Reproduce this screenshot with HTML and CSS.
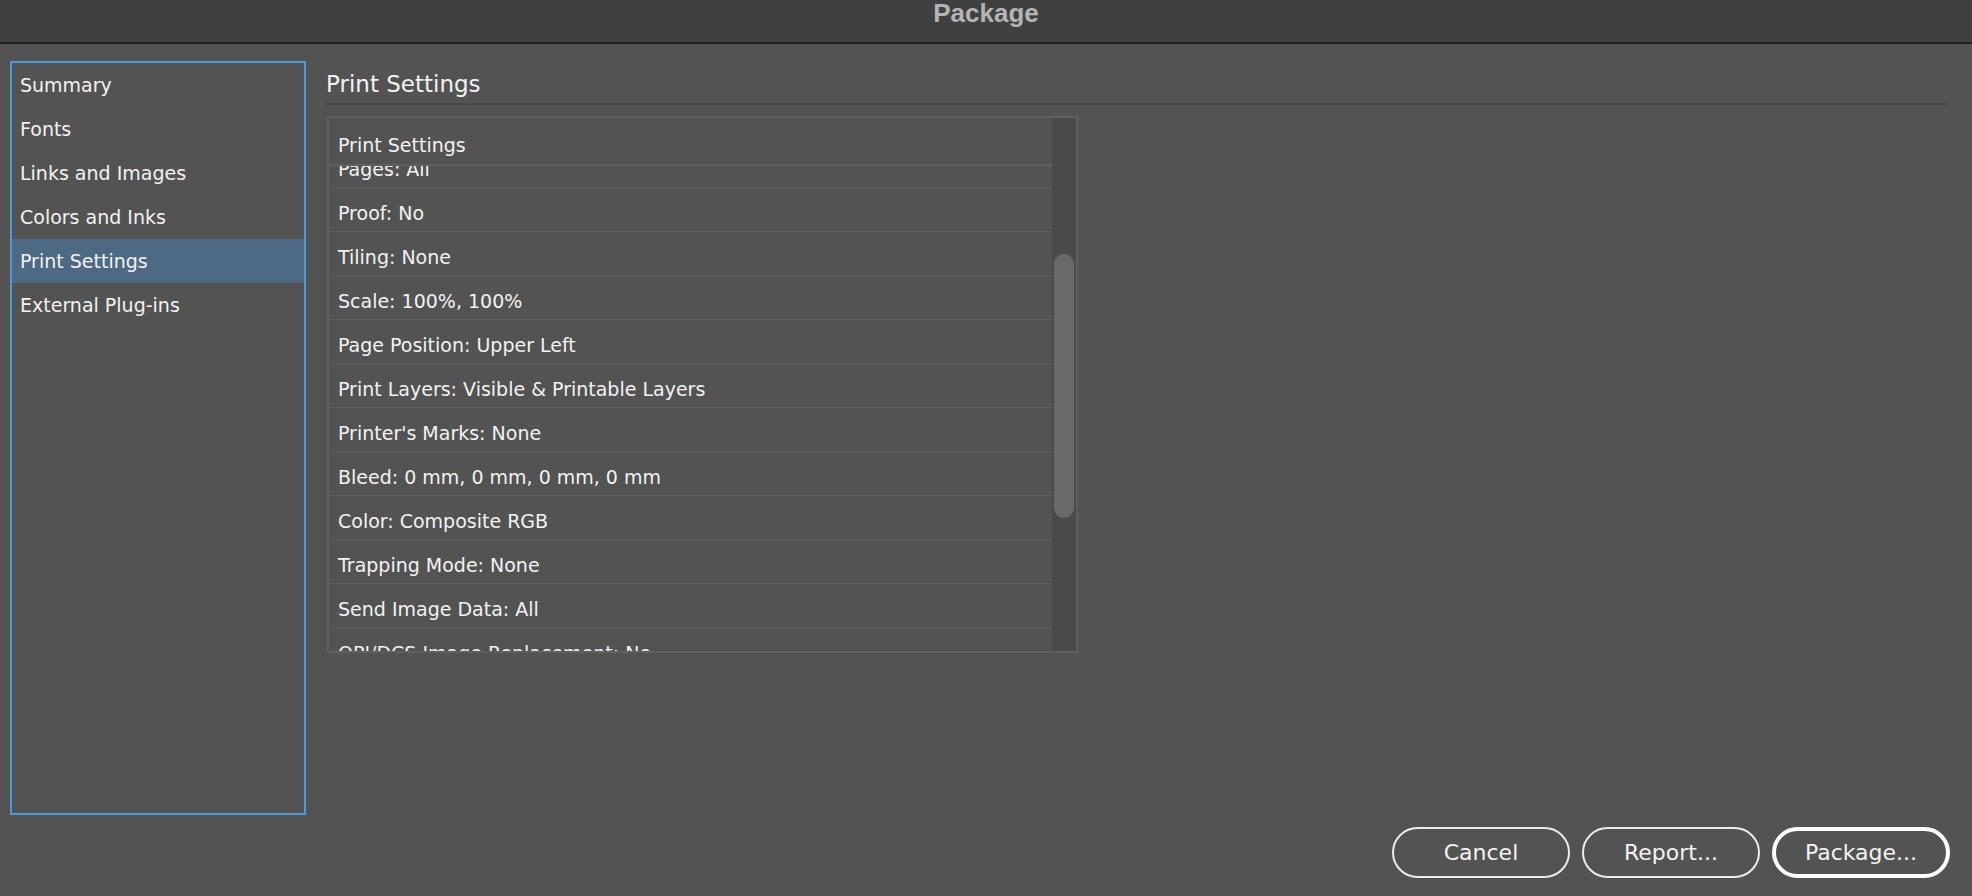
FILE: index.html
```html
<!DOCTYPE html>
<html lang="en">
<head>
    <meta charset="UTF-8">
    <meta name="viewport" content="width=device-width, initial-scale=1.0">
    <title>Package</title>
    <link rel="stylesheet" href="styles.css">
</head>

<body>
    <header class="titlebar">Package</header>

    <div class="dialog">
        <div class="content">
            <ul class="sidebar">
                <li>Summary</li>
                <li>Fonts</li>
                <li>Links and Images</li>
                <li>Colors and Inks</li>
                <li class="active">Print Settings</li>
                <li>External Plug-ins</li>
            </ul>

            <section class="main">
                <h2 class="section-title">Print Settings</h2>

                <div class="table-box">
                    <div class="table-body">
                        <div class="table-head">Print Settings</div>
                        <div class="rows-view">
                            <ul class="rows">
                                <li>Pages: All</li>
                                <li>Proof: No</li>
                                <li>Tiling: None</li>
                                <li>Scale: 100%, 100%</li>
                                <li>Page Position: Upper Left</li>
                                <li>Print Layers: Visible &amp; Printable Layers</li>
                                <li>Printer's Marks: None</li>
                                <li>Bleed: 0 mm, 0 mm, 0 mm, 0 mm</li>
                                <li>Color: Composite RGB</li>
                                <li>Trapping Mode: None</li>
                                <li>Send Image Data: All</li>
                                <li>OPI/DCS Image Replacement: No</li>
                                <li>Page Size: Letter</li>
                            </ul>
                        </div>
                    </div>
                    <div class="scroll-track">
                        <div class="scroll-thumb"></div>
                    </div>
                </div>
            </section>
        </div>

        <div class="buttons">
            <button class="btn">Cancel</button>
            <button class="btn">Report...</button>
            <button class="btn btn-default">Package...</button>
        </div>
    </div>
</body>
</html>
```

FILE: styles.css
```css
* {
    box-sizing: border-box;
}

body {
    margin: 0;
    padding: 0;
    height: 896px;
    overflow: hidden;
    background-color: #535353;
    font-family: "DejaVu Sans", Verdana, sans-serif;
    color: #f2f2f2;
}

.titlebar {
    height: 44px;
    background-color: #404040;
    border-bottom: 2px solid #1f1f1f;
    text-align: center;
    font-family: "Liberation Sans", Arial, sans-serif;
    font-weight: bold;
    font-size: 26px;
    line-height: 27px;
    color: #b4b4b4;
}

.dialog {
    padding: 17px 22px 0 10px;
}

.content {
    display: flex;
    height: 754px;
}

/* Левая колонка со списком разделов */
.sidebar {
    list-style: none;
    margin: 0;
    padding: 0;
    width: 296px;
    border: 2px solid #4f98dd;
    font-size: 19px;
}

.sidebar li {
    height: 44px;
    line-height: 44px;
    padding-left: 8px;
}

.sidebar li.active {
    background-color: #4e6984;
}

.main {
    flex: 1;
    margin-left: 20px;
}

.section-title {
    margin: 0;
    padding-top: 5px;
    height: 44px;
    line-height: 37px;
    font-size: 23px;
    font-weight: normal;
    border-bottom: 2px solid #494949;
}

.table-box {
    display: flex;
    width: 751px;
    height: 537px;
    margin: 11px 0 0 1px;
    border: 2px solid #5f5f5f;
    font-size: 19px;
}

.table-body {
    flex: 1;
    display: flex;
    flex-direction: column;
    overflow: hidden;
}

.table-head {
    height: 48px;
    line-height: 38px;
    padding: 8px 0 0 9px;
    border-bottom: 2px solid #5f5f5f;
    flex-shrink: 0;
}

.rows-view {
    flex: 1;
    overflow: hidden;
}

.rows {
    list-style: none;
    margin: -22px 0 0;
    padding: 0;
}

.rows li {
    height: 44px;
    line-height: 35px;
    padding: 8px 0 0 9px;
    border-bottom: 1px solid #5c5c5c;
}

.scroll-track {
    width: 24px;
    background-color: #4a4a4a;
    padding: 136px 2px 0;
}

.scroll-thumb {
    height: 264px;
    border-radius: 10px;
    background-color: #696969;
}

.buttons {
    display: flex;
    justify-content: flex-end;
    gap: 12px;
    margin-top: 12px;
}

.btn {
    width: 178px;
    height: 51px;
    border: 2px solid #ececec;
    border-radius: 26px;
    background: transparent;
    color: #f4f4f4;
    font-family: "DejaVu Sans", Verdana, sans-serif;
    font-size: 22px;
    padding: 0;
}

.btn-default {
    border: 4px solid #ffffff;
}
```
